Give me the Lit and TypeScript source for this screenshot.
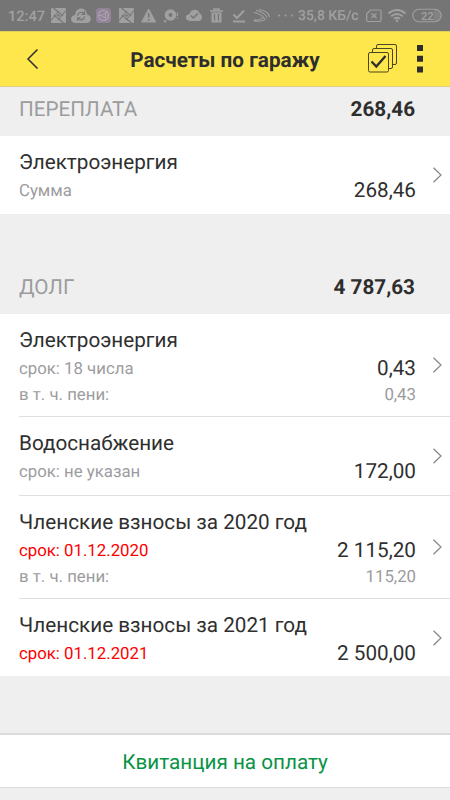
import { LitElement, html, css, svg, nothing } from "lit";
import { customElement, property } from "lit/decorators.js";

interface Charge {
  name: string;
  note: string;
  overdue?: boolean;
  amount: string;
  penalty?: string;
}

const overpaid: Charge[] = [{ name: "Электроэнергия", note: "Сумма", amount: "268,46" }];

const debts: Charge[] = [
  { name: "Электроэнергия", note: "срок: 18 числа", amount: "0,43", penalty: "0,43" },
  { name: "Водоснабжение", note: "срок: не указан", amount: "172,00" },
  { name: "Членские взносы за 2020 год", note: "срок: 01.12.2020", overdue: true, amount: "2 115,20", penalty: "115,20" },
  { name: "Членские взносы за 2021 год", note: "срок: 01.12.2021", overdue: true, amount: "2 500,00" },
];

const tile = (x: number) => svg`
  <g transform="translate(${x} 8)">
    <rect width="15" height="15" rx="1" fill="#a0a0a0"/>
    <path d="M2.500 0L12 8M15 2.500L7 12M12.500 15L3 7M0 12.500L8 3" stroke="#757575" stroke-width="1.100"/>
    <path d="M7.500 4.500L10.500 7.500L7.500 10.500L4.500 7.500Z" fill="#989898"/>
    <path d="M7.500 5.800V9.200M5.800 7.500H9.200" stroke="#7c7c7c"/>
  </g>`;

@customElement("status-bar")
export class StatusBar extends LitElement {
  static styles = css`
    :host { display: flex; height: 31px; background: #757575; color: #a1a1a1; align-items: center;
      font: 500 15px/31px Roboto, sans-serif; box-sizing: border-box; padding-left: 8px; white-space: pre; text-rendering: geometricPrecision; }
    .time { width: 43px; font-size: 14.600px; }
    .time, .speed { padding-top: 1px; }
    .speed { width: 68px; font-size: 13.900px; }
    svg { display: block; flex: none; }
  `;
  render() {
    return html`
      <span class="time">12:47</span>
      <svg width="247" height="31" viewBox="51 0 247 31" fill="none">
        ${tile(51)}
        <path d="M75 23C69.500 22 70 15.500 75 15C76 6.500 86 6.500 87 14.500C92.500 15.500 92 23 86.500 23Z" fill="#a0a0a0"/>
        <path d="M77.500 15.800A3.600 3.600 0 0 1 83.800 13.500M84.500 11.300V14.300H81.500M84.600 16.300A3.600 3.600 0 0 1 78.300 18.600M77.600 20.800V17.800H80.600" stroke="#757575" stroke-width="1.200"/>
        <rect x="96" y="8" width="15" height="15" rx="3.500" fill="#94849a"/>
        <circle cx="103.500" cy="15.500" r="5" stroke="#ada5b0" stroke-width="1.100"/>
        <path d="M101 15.500L105.500 13V18ZM98.500 15.500H101M105.500 13L106.500 11M105.500 18L106.500 20" stroke="#ada5b0" stroke-width="0.900"/>
        ${tile(119)}
        <path d="M148.700 9L155.700 22H141.700Z" fill="#a0a0a0" stroke="#a0a0a0" stroke-linejoin="round"/>
        <path d="M148.700 13V17.500M148.700 19V20.800" stroke="#757575" stroke-width="1.500"/>
        <circle cx="170.500" cy="15" r="5.800" fill="#a0a0a0"/>
        <circle cx="170.500" cy="15" r="1.900" fill="#757575"/>
        <path d="M164 21.300H166.300" stroke="#a0a0a0" stroke-width="2"/>
        <path d="M177.500 12.500V16M177.500 17.200V18.600" stroke="#a0a0a0" stroke-width="1.200"/>
        <path d="M190 21C184.500 20.500 184.500 14.500 189.500 14C191 8 199 8.500 199.500 13.500C203 14 203 20.500 199 21Z" fill="#a0a0a0"/>
        <path d="M190.800 15.500L193.500 18L197.800 13.500" stroke="#757575" stroke-width="1.500"/>
        <path d="M210 11H223M214 11V9H219V11" stroke="#a0a0a0" stroke-width="1.500"/>
        <path d="M211.500 12.500H221.500V22.500H211.500Z" fill="#a0a0a0"/>
        <path d="M214.500 14V20.500M218.500 14V20.500" stroke="#757575" stroke-width="1.300"/>
        <path d="M233.500 14.500L237 18L244 10.500M233 21.500H245" stroke="#a0a0a0" stroke-width="2"/>
        <path d="M259 9.500Q268 10.500 269.500 17M256 10.500Q265 12 267 18M254 12.500Q262 14 264.500 19M253.500 20Q260 20.500 262.500 17.500M254 21Q264 21.500 265.500 19" stroke="#a0a0a0" stroke-width="1.100"/>
        <circle cx="279" cy="15.500" r="1" fill="#a0a0a0"/><circle cx="285.500" cy="15.500" r="1" fill="#a0a0a0"/><circle cx="292" cy="15.500" r="1" fill="#a0a0a0"/>
      </svg>
      <span class="speed">35,8 КБ/с</span>
      <svg width="84" height="31" viewBox="366 0 84 31" fill="none">
        <path d="M370.500 10H379.500Q381 10 381 11.500V20Q381 21.500 379.500 21.500H368.200Q366.700 21.500 366.700 20V13.800Z" stroke="#a0a0a0" stroke-width="1.200"/>
        <path d="M371.500 13.500L376.500 18M376.500 13.500L371.500 18" stroke="#a0a0a0" stroke-width="1.400"/>
        <path d="M388.500 13.500Q397 6.500 405.500 13.500M391.200 16.300Q397 11.500 402.800 16.300M394 18.800Q397 16.500 400 18.800" stroke="#a0a0a0" stroke-width="1.900"/>
        <circle cx="397" cy="20.700" r="1.300" fill="#a0a0a0"/>
        <path d="M433.500 10H436A5.500 5.500 0 0 1 436 21H433.500Z" fill="#828282"/>
        <rect x="412.700" y="9.200" width="28.500" height="12.600" rx="6.300" stroke="#a0a0a0" stroke-width="1.100"/>
        <text x="427.300" y="19.500" text-anchor="middle" fill="#a4a4a4" font-family="Roboto, sans-serif" font-size="11" font-weight="500">22</text>
      </svg>`;
  }
}

@customElement("title-bar")
export class TitleBar extends LitElement {
  static styles = css`
    :host { display: grid; grid-template-columns: 98px 1fr 98px; height: 56px; box-sizing: border-box;
      align-items: center; background: #fde74d; border-top: 1px solid #e2d157; border-bottom: 1px solid #dfd181; }
    h1 { margin: 0; padding-top: 4px; text-align: center; font: 700 20.700px/24px Roboto, sans-serif; color: #2e2e2e;
      white-space: nowrap; text-rendering: geometricPrecision; }
    svg { display: block; }
  `;
  render() {
    return html`
      <svg width="98" height="54" viewBox="0 32 98 54" fill="none"><path d="M37.500 49.500L28 59L37.500 68.500" stroke="#2d2d2d" stroke-width="1.500"/></svg>
      <h1>Расчеты по гаражу</h1>
      <svg width="98" height="54" viewBox="352 32 98 54" fill="none" stroke="#4b461f">
        <path d="M376.500 48V46Q376.500 44.500 378 44.500H395Q396.500 44.500 396.500 46V63Q396.500 64.500 395 64.500H393M372.500 52V50Q372.500 48.500 374 48.500H391Q392.500 48.500 392.500 50V67Q392.500 68.500 391 68.500H389"/>
        <rect x="368.500" y="52.500" width="20" height="19.500" rx="1.500"/>
        <path d="M371.500 61.500L376.300 66.500L385.500 56" stroke="#2d2d2d" stroke-width="2.300"/>
        <path d="M417 45H423V51H417ZM417 55.800H423V61.800H417ZM417 66.500H423V72.500H417Z" fill="#2d2d2d" stroke="none"/>
      </svg>`;
  }
}

@customElement("charge-row")
export class ChargeRow extends LitElement {
  @property({ attribute: false }) charge!: Charge;
  static styles = css`
    :host { display: flex; align-items: center; background: #fff; padding-right: 8px; }
    .text { flex: 1; padding: 13px 0 10px 19px; }
    .name { font-size: 20.700px; line-height: 28px; margin-bottom: 1px; }
    .line { display: flex; justify-content: space-between; line-height: 26px; height: 26px; font-size: 16.800px; color: #9c9c9e; }
    .line + .line { height: 24px; line-height: 26px; }
    .overdue { color: #fc0000; }
    .amount { font-size: 20.700px; color: #2f2f2f; }
    svg { display: block; flex: none; margin-left: 17px; }
  `;
  render() {
    const c = this.charge;
    return html`
      <div class="text">
        <div class="name">${c.name}</div>
        <div class="line"><span class=${c.overdue ? "overdue" : ""}>${c.note}</span><span class="amount">${c.amount}</span></div>
        ${c.penalty ? html`<div class="line"><span>в т. ч. пени:</span><span>${c.penalty}</span></div>` : nothing}
      </div>
      <svg width="9" height="16" viewBox="0 0 9 16" fill="none"><path d="M0.500 0.700L8 8L0.500 15.300" stroke="#858585" stroke-width="1.200"/></svg>`;
  }
}

@customElement("app-root")
export class AppRoot extends LitElement {
  static styles = css`
    :host { display: flex; flex-direction: column; height: 800px; background: #efefef; color: #2f2f2f; font-family: Roboto, sans-serif;
      overflow: hidden; text-rendering: geometricPrecision; }
    .heading { display: flex; justify-content: space-between; box-sizing: border-box; padding: 0 35px 0 19px; font-size: 20.700px; line-height: 24px; color: #9c9c9e; }
    .first { height: 49px; padding-top: 11px; }
    .second { height: 100px; padding-top: 62px; }
    .total { color: #2e2e2e; font-weight: 700; }
    .debts { height: 362px; overflow: hidden; }
    .sep { height: 1px; margin-left: 19px; background: #dfdfdf; }
    .list { background: #fff; }
    .pay { margin-top: 57px; height: 55px; box-sizing: border-box; border: solid #dcdcdc; border-width: 2px 0 1px; background: #fff;
      color: #099346; text-align: center; font-size: 20.700px; line-height: 56px; }
  `;
  render() {
    return html`
      <status-bar></status-bar>
      <title-bar></title-bar>
      <div class="heading first"><span>ПЕРЕПЛАТА</span><span class="total">268,46</span></div>
      <div class="list">${overpaid.map((c) => html`<charge-row .charge=${c}></charge-row>`)}</div>
      <div class="heading second"><span>ДОЛГ</span><span class="total">4 787,63</span></div>
      <div class="list debts">${debts.map((c, i) => html`${i ? html`<div class="sep"></div>` : nothing}<charge-row .charge=${c}></charge-row>`)}</div>
      <div class="pay">Квитанция на оплату</div>`;
  }
}
